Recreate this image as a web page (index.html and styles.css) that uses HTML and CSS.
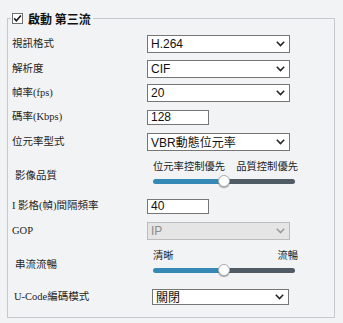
FILE: index.html
```html
<!DOCTYPE html>
<html>
<head>
    <title>第三流設定</title>
    <meta charset="UTF-8">
    <meta name="viewport" content="width=device-width, initial-scale=1.0">
    <link rel="stylesheet" href="styles.css">
</head>
<body>
<fieldset class="stream-box">
    <legend class="stream-title">
        <span class="check">
            <svg width="11" height="11" viewBox="0 0 11 11">
                <rect x="0.5" y="0.5" width="10" height="10" fill="#fff" stroke="#707070"/>
                <path d="M2.2 5.4 L4.4 7.8 L8.9 2.4" fill="none" stroke="#1a1a1a" stroke-width="1.6"/>
            </svg>
        </span>
        <span>啟動 第三流</span>
    </legend>

    <div class="row h25">
        <label class="row-label">視訊格式</label>
        <div class="dropdown"><span>H.264</span><svg class="chevron" width="9" height="6" viewBox="0 0 9 6"><path d="M0.8 0.8 L4.5 4.6 L8.2 0.8"/></svg></div>
    </div>
    <div class="row h25">
        <label class="row-label">解析度</label>
        <div class="dropdown"><span>CIF</span><svg class="chevron" width="9" height="6" viewBox="0 0 9 6"><path d="M0.8 0.8 L4.5 4.6 L8.2 0.8"/></svg></div>
    </div>
    <div class="row h24">
        <label class="row-label">幀率(fps)</label>
        <div class="dropdown"><span>20</span><svg class="chevron" width="9" height="6" viewBox="0 0 9 6"><path d="M0.8 0.8 L4.5 4.6 L8.2 0.8"/></svg></div>
    </div>
    <div class="row h24">
        <label class="row-label">碼率(Kbps)</label>
        <input class="textbox" type="text" value="128">
    </div>
    <div class="row h25">
        <label class="row-label">位元率型式</label>
        <div class="dropdown"><span>VBR動態位元率</span><svg class="chevron" width="9" height="6" viewBox="0 0 9 6"><path d="M0.8 0.8 L4.5 4.6 L8.2 0.8"/></svg></div>
    </div>
    <div class="slider-row">
        <label class="row-label indent">影像品質</label>
        <div class="slider-block">
            <div class="slider-ends"><span>位元率控制優先</span><span>品質控制優先</span></div>
            <input class="level" type="range" min="0" max="100" value="50">
        </div>
    </div>
    <div class="row h24">
        <label class="row-label">I 影格(幀)間隔頻率</label>
        <input class="textbox" type="text" value="40">
    </div>
    <div class="row h25">
        <label class="row-label">GOP</label>
        <div class="dropdown disabled"><span>IP</span><svg class="chevron" width="9" height="6" viewBox="0 0 9 6"><path d="M0.8 0.8 L4.5 4.6 L8.2 0.8"/></svg></div>
    </div>
    <div class="slider-row tall">
        <label class="row-label indent">串流流暢</label>
        <div class="slider-block">
            <div class="slider-ends"><span>清晰</span><span>流暢</span></div>
            <input class="level" type="range" min="0" max="100" value="50">
        </div>
    </div>
    <div class="row h25">
        <label class="row-label ucode">U-Code編碼模式</label>
        <div class="dropdown small"><span>關閉</span><svg class="chevron" width="9" height="6" viewBox="0 0 9 6"><path d="M0.8 0.8 L4.5 4.6 L8.2 0.8"/></svg></div>
    </div>
</fieldset>
</body>
</html>
```

FILE: styles.css
```css
body {
  margin: 0;
  background: #f2f3f5;
  font-family: "Liberation Serif", "Noto Sans CJK TC", serif;
  font-size: 11px;
  color: #1e1e1e;
}

.stream-box {
  margin: 10px 8px 0 7px;
  padding: 5px 4px 8px 4px;
  border: 1px solid #c6c8cb;
  min-width: 0;
}

.stream-title {
  display: flex;
  align-items: center;
  gap: 5px;
  margin-left: -1px;
  padding: 0 2px 0 1px;
  height: 16px;
  font-family: "Noto Sans CJK TC", sans-serif;
  font-weight: bold;
  font-size: 12px;
  color: #111;
}

.check {
  display: flex;
}

.row {
  display: flex;
  align-items: center;
}
.h24 { height: 24px; }
.h25 { height: 25px; }

.row-label {
  flex: none;
  width: 135px;
  line-height: 14px;
  font-size: 10.5px;
}
.row-label.indent {
  width: 132px;
  padding-left: 3px;
}
.row-label.ucode {
  width: 138px;
  padding-left: 2px;
}

.dropdown {
  box-sizing: border-box;
  width: 143px;
  height: 18px;
  border: 1px solid #767676;
  background: #fff;
  display: flex;
  align-items: center;
  justify-content: space-between;
  padding: 0 4px 0 3px;
  font-family: "Liberation Sans", "Noto Sans CJK TC", sans-serif;
  font-size: 12px;
  color: #111;
}
.dropdown.small {
  width: 137px;
  height: 16px;
}
.dropdown.disabled {
  background: #e5e5e5;
  border-color: #bcbcbc;
  color: #8c8c8c;
}

.chevron path {
  fill: none;
  stroke: #222;
  stroke-width: 1.5;
}
.disabled .chevron path {
  stroke: #9a9a9a;
}

.textbox {
  box-sizing: border-box;
  width: 62px;
  height: 15px;
  margin: 0;
  padding: 0 3px;
  border: 1px solid #767676;
  background: #fff;
  font-family: "Liberation Sans", sans-serif;
  font-size: 12px;
  color: #111;
  outline: none;
}

.slider-row {
  display: flex;
  height: 40px;
}
.slider-row.tall {
  height: 41px;
}
.slider-row .row-label {
  align-self: center;
  padding-top: 3px;
}

.slider-block {
  display: flex;
  flex-direction: column;
  margin-left: 6px;
  padding-top: 5px;
}

.slider-ends {
  display: flex;
  justify-content: space-between;
  width: 145px;
  line-height: 13px;
  font-family: "Noto Sans CJK TC", sans-serif;
  font-size: 10.3px;
}

.level {
  -webkit-appearance: none;
  appearance: none;
  width: 142px;
  height: 12px;
  margin: 3px 0 0;
  background: transparent;
}
.level::-webkit-slider-runnable-track {
  height: 5px;
  border-radius: 3px;
  background: linear-gradient(to right, #3489b5 50%, #505b66 50%);
}
.level::-webkit-slider-thumb {
  -webkit-appearance: none;
  width: 12px;
  height: 12px;
  margin-top: -3.5px;
  border-radius: 50%;
  background: #fff;
  border: 1px solid #a9adb1;
  box-shadow: 0 1px 1px rgba(0, 0, 0, 0.35);
}
```
